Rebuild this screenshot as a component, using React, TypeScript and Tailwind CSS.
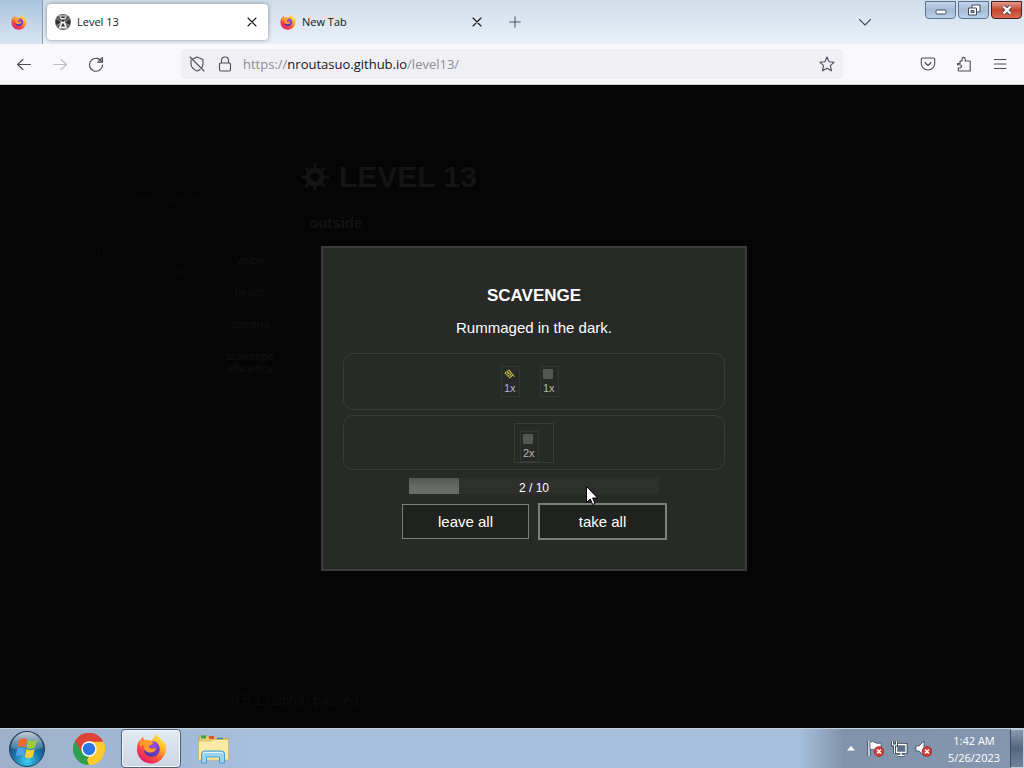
import React from "react";

const UI = "font-['Open_Sans','Noto_Sans',sans-serif]";
const SANS = "font-['Liberation_Sans',Arial,sans-serif]";

function Firefox({ id, className }: { id: string; className: string }) {
  return (
    <svg viewBox="0 0 32 32" className={className} aria-hidden="true">
      <defs>
        <linearGradient id={id + "a"} x1="0.85" y1="0.1" x2="0.2" y2="0.95">
          <stop offset="0" stopColor="#fff04f" />
          <stop offset="0.3" stopColor="#ffb52c" />
          <stop offset="0.6" stopColor="#ff5a36" />
          <stop offset="1" stopColor="#e5166e" />
        </linearGradient>
        <radialGradient id={id + "b"} cx="0.6" cy="0.3" r="0.7">
          <stop offset="0" stopColor="#a04cf0" />
          <stop offset="1" stopColor="#4b36b0" />
        </radialGradient>
      </defs>
      <path
        fill={`url(#${id}a)`}
        d="M20.500 0c1 4 6.500 6 8.500 10.500 1 0 1.500-.5 1.500-.5 1.500 6 .8 11-3 15.500C24 30 20 31.500 16 31.500 7.500 31.500 1 25 1 17c0-4 1-7 2.500-9.500L4 9c.5-2.500 2-4 3.500-5.500 0 1.500.5 3 1.500 4 2-.5 4-.3 6 .5 2-1 4.500-3 5.500-8z"
      />
      <path
        fill={`url(#${id}b)`}
        d="M17 8.500c4 0 7.500 3.500 7.500 8s-3.500 8-8 8-8-3-8.300-7c2 1.500 5 2 7.500.5 1.500-.8 3-1 3.800-1.800-1-1.200-4 .3-5.700-.7-1.500-.8-2-2.500-1.500-3.500 1.500.2 3-1.500 4.700-3.500z"
      />
      <path
        fill="#ff9a2e"
        d="M4 9c2-2.500 7-2.500 10-.5 1.200.8 3 .7 4 1.200-.3 2-3.500 2.600-4.300 3.800-.4 1.500.6 3 2.800 3.200 1.700.1 3-1.200 4.500-.7-1 3.500-4.500 4.800-8 4-4-1-5.500-4-4.500-7.500C6.500 12 5 13 4 15z"
      />
    </svg>
  );
}

function Favicon() {
  return (
    <svg viewBox="0 0 16 16" className="size-4 shrink-0" aria-hidden="true">
      <circle cx="8" cy="8" r="8" fill="#5a5a5a" />
      <path d="M4 1.500h8L9.500 7l3 7.500h-9L6.500 7z" fill="#ececec" />
      <path d="M5 2.500h6L9 4H7zM5.500 5.500L8 8l2.500-2.500M8 9l2 3.500H6z" fill="#2a2a2a" />
      <path d="M1 6.500l2.500-2 1.500 3L3.500 11 1 10zM15 6.500l-2.500-2-1.500 3 1.500 3.500 2.500-1z" fill="#303030" />
      <path d="M1.500 4.500l4 3M14.500 4.500l-4 3M1.500 12l4-3M14.500 12l-4-3" stroke="#b5b5b5" strokeWidth=".8" />
    </svg>
  );
}

function Line({ d, className = "size-4", width = 1.1 }: { d: string; className?: string; width?: number }) {
  return (
    <svg viewBox="0 0 16 16" className={className} fill="none" stroke="currentColor" strokeWidth={width} strokeLinecap="round" strokeLinejoin="round" aria-hidden="true">
      <path d={d} />
    </svg>
  );
}

const paths = {
  close: "M4 4l8 8M12 4l-8 8",
  plus: "M8 2v12M2 8h12",
  down: "M2.500 5.500L8 11l5.500-5.500",
  back: "M14.500 8.500h-13M7 3.500l-5.500 5L7 13.500",
  forward: "M1.500 8.500h13M9 3.500l5.500 5L9 13.500",
  reload: "M14 6.200A6.500 6.500 0 1 0 14.500 9M14.500 1.500v4.800H9.700z",
  shield: "M3.700 3L8 1l6 2.500v4c0 1.500-.4 2.800-1.100 4M11 13.500Q9.500 14.700 8 15 2 12.500 2 7.500V4M1 1l14 14",
  lock: "M4.500 7V4.500a3.500 3.500 0 0 1 7 0V7M3.500 7h9a1 1 0 0 1 1 1v5.500a1.500 1.500 0 0 1-1.500 1.500H4a1.500 1.500 0 0 1-1.500-1.500V8a1 1 0 0 1 1-1z",
  star: "M8 1l2.100 4.700 5.100.5-3.800 3.500 1.100 5.100L8 12.200l-4.500 2.600 1.100-5.100L.8 6.200l5.100-.5z",
  pocket: "M2.500 2h11a1.200 1.200 0 0 1 1.200 1.200V7.500a6.700 6.500 0 0 1-13.400 0V3.200A1.200 1.200 0 0 1 2.500 2zM5 6.500l3 3 3-3",
  puzzle: "M6 5V3a1.600 1.600 0 0 1 3.200 0v2h4.300a.7.700 0 0 1 .7.700V15H3a.7.700 0 0 1-.7-.7V12h1.500a1.600 1.600 0 0 0 0-3.300H1.500V7.500H4V5z",
  menu: "M2.500 3.500h11.500M2.500 8h11.500M2.500 12.500h11.500",
};

function ToolButton({ label, d, faded = false }: { label: string; d: string; faded?: boolean }) {
  return (
    <button aria-label={label} className={"flex h-8 w-9 items-center justify-center " + (faded ? "text-[#bcbcc2]" : "text-[#4d4c58]")}>
      <Line d={d} />
    </button>
  );
}

function Tab({ title, active, icon }: { title: string; active?: boolean; icon: React.ReactNode }) {
  return (
    <div className={"my-1 ml-1 flex w-[221px] items-center gap-1.5 rounded px-2 text-[#15141a] " + (active ? "bg-white shadow-[0_0_4px_rgba(60,70,90,0.55)]" : "")}>
      {icon}
      <span className="flex-1 truncate text-[11px] leading-4">{title}</span>
      <button aria-label={"Close " + title} className="flex">
        <Line d={paths.close} />
      </button>
    </div>
  );
}

function WindowControls() {
  const base = "flex h-[18px] w-[31px] items-center justify-center rounded-b-sm border";
  const blue = " border-[#5c7390] bg-linear-to-b from-[#c3d5ea] via-[#a4bbd6] to-[#bcd2e9]";
  return (
    <div className="flex gap-0.5 self-start pt-px pr-0.5">
      <button aria-label="Minimize" className={base + blue}>
        <svg viewBox="0 0 12 10" className="h-2.5 w-3"><rect x="1" y="5" width="10" height="4" rx="1" fill="#fff" stroke="#414d60" /></svg>
      </button>
      <button aria-label="Restore" className={base + blue}>
        <svg viewBox="0 0 14 12" className="h-3 w-3.5" fill="#fff" stroke="#414d60">
          <path d="M5 1h8v7H5z" /><path d="M1.500 4h8v7h-8z" /><path d="M4 6.500h3v2H4z" fill="#8ba2c0" />
        </svg>
      </button>
      <button aria-label="Close" className={base + " border-[#4b1c1c] bg-linear-to-b from-[#e09a8c] via-[#c4432c] to-[#d86b50]"}>
        <svg viewBox="0 0 12 10" className="h-2.5 w-3"><path d="M2.500 1.500l7 7M9.500 1.500l-7 7" stroke="#50414a" strokeWidth="4" /><path d="M2.500 1.500l7 7M9.500 1.500l-7 7" stroke="#fff" strokeWidth="2.400" /></svg>
      </button>
    </div>
  );
}

function BrowserChrome() {
  return (
    <header className={UI}>
      <div className="flex h-11 bg-linear-to-b from-[#cfdde9] to-[#eaf1f9]">
        <div className="flex w-[43px] items-center justify-center border-r border-[#8f9fb3] bg-linear-to-b from-[#a9c3de] to-[#d9e5f1] pr-1">
          <Firefox id="pin" className="size-4" />
        </div>
        <Tab title="Level 13" active icon={<Favicon />} />
        <Tab title="New Tab" icon={<Firefox id="tab" className="size-4 shrink-0" />} />
        <button aria-label="New tab" className="ml-1.5 flex w-8 items-center justify-center text-[#4d4c58]"><Line d={paths.plus} className="size-3.5" /></button>
        <button aria-label="List all tabs" className="mr-11 ml-auto flex w-8 items-center justify-center text-[#4d4c58]"><Line d={paths.down} /></button>
        <WindowControls />
      </div>
      <div className="flex h-[41px] items-center border-b border-[#cfcfd3] bg-[#f9f9fb] px-1.5">
        <ToolButton label="Back" d={paths.back} />
        <ToolButton label="Forward" d={paths.forward} faded />
        <ToolButton label="Reload" d={paths.reload} />
        <div className="mx-[67px] flex h-[30px] flex-1 items-center rounded bg-[#f0f0f4] px-2 text-[#4d4c58]">
          <Line d={paths.shield} />
          <Line d={paths.lock} className="ml-3 size-4" />
          <a href="https://nroutasuo.github.io/level13/" className="ml-2.5 flex-1 pt-0.5 text-[13px] text-[#8d8d93]">
            https://<span className="text-[#15141a]">nroutasuo.github.io</span>/level13/
          </a>
          <button aria-label="Bookmark this page" className="flex"><Line d={paths.star} /></button>
        </div>
        <ToolButton label="Save to Pocket" d={paths.pocket} />
        <ToolButton label="Extensions" d={paths.puzzle} />
        <ToolButton label="Menu" d={paths.menu} />
      </div>
    </header>
  );
}

function Metal() {
  return <span className="block size-2.5 bg-[#555755]" />;
}

function Rope() {
  return (
    <svg viewBox="0 0 12 10" className="h-2.5 w-3" aria-hidden="true">
      <path d="M1 4l4-3M2.500 5.500l4-3M4 7l4-3M6 8.500l3.500-3M1 4l5 5M3 2.500l5 5M5 1l5.500 7" stroke="#cfca45" strokeWidth="1.100" strokeDasharray="1.400 .6" fill="none" />
    </svg>
  );
}

function Item({ count, children }: { count: string; children: React.ReactNode }) {
  return (
    <li className="flex h-[31px] w-[19px] flex-col items-start border border-[#343634] pt-px pl-0.5 text-[11px] leading-4 text-[#b4b6b4]">
      <span className="flex h-3 items-center">{children}</span>
      <span>{count}</span>
    </li>
  );
}

function Dialog() {
  const button = "h-[35px] w-[127px] bg-[#202220] pt-px text-[15px] text-white outline-1 -outline-offset-1 outline-[#7d7f7d]";
  return (
    <section role="dialog" aria-label="Scavenge" className="w-[426px] border-2 border-[#3a3c3a] bg-[#282a28] px-5 pb-[30px] text-center text-white">
      <h2 className="mt-9 text-[17px] leading-6 font-bold">SCAVENGE</h2>
      <p className="mt-2 text-[15px] leading-6">Rummaged in the dark.</p>
      <ul className="mt-[13px] flex h-[57px] justify-center gap-5 rounded-[10px] border border-[#3a3c3a] pt-3 pr-2">
        <Item count="1x"><Rope /></Item>
        <Item count="1x"><Metal /></Item>
      </ul>
      <div className="mt-[5px] flex h-[55px] items-center justify-center rounded-[10px] border border-[#3a3c3a]">
        <ul className="flex size-10 justify-start border border-[#3a3c3a] pt-[7px] pl-[5px]">
          <Item count="2x"><Metal /></Item>
        </ul>
      </div>
      <div role="progressbar" aria-label="Bag" aria-valuenow={2} aria-valuemax={10} className="mx-auto mt-2 grid h-4 w-[250px] bg-[#2e302e]">
        <span className="col-start-1 row-start-1 h-4 w-1/5 bg-linear-to-b from-[#555755] via-[#666866] to-[#6a6c6a]" />
        <span className="col-start-1 row-start-1 pt-0.5 text-[12px] leading-4">2 / 10</span>
      </div>
      <div className="mt-2.5 flex items-center justify-center gap-2.5">
        <button className={button}>leave all</button>
        <button className={button + " shadow-[0_0_0_1px_#7d7f7d]"}>take all</button>
      </div>
    </section>
  );
}

function Game() {
  return (
    <main className={"relative flex flex-1 flex-col bg-[#050505] text-[#0d0d0d] " + SANS}>
      <div aria-hidden="true" className="flex flex-1 pt-[76px]">
        <div className="flex w-[215px] flex-col items-end pt-7 text-[11px] leading-5 text-[#0a0a0a]">
          <p>Found a new place today</p>
          <p className="mt-8">There are buildings here</p>
          <p className="pr-6">It is dark</p>
        </div>
        <div className="flex w-[70px] flex-col items-center gap-5 pt-[93px] text-center text-[11px] leading-3 text-[#121212]">
          <span>vision</span>
          <span>health</span>
          <span>stamina</span>
          <span>scavenge efficiency</span>
        </div>
        <div className="pl-4">
          <h1 className="flex items-center gap-2.5 text-[30px] leading-8 font-bold text-[#141414]">
            <svg viewBox="0 0 32 32" className="size-7" fill="none" stroke="currentColor">
              <circle cx="16" cy="16" r="8" strokeWidth="6" />
              <path d="M16 0v7M16 25v7M0 16h7M25 16h7M5 5l5 5M22 22l5 5M27 5l-5 5M10 22l-5 5" strokeWidth="3" />
            </svg>
            LEVEL 13
          </h1>
          <h2 className="mt-5 pl-2 text-[15px] leading-5 font-bold text-[#121212]">outside</h2>
        </div>
      </div>
      <p aria-hidden="true" className="pb-[18px] pl-[231px] text-[14px] leading-5">0.5.1 (alpha) passed</p>
      <div className="absolute inset-0 flex items-start justify-center pt-[161px] pl-11">
        <Dialog />
      </div>
      <svg viewBox="0 0 12 19" className="absolute top-[401px] left-[calc(50%+74px)] h-[19px] w-3" aria-hidden="true">
        <path d="M.5.5v16l3.700-3.500 2.500 5.500 2.300-1-2.400-5.500h5z" fill="#fff" stroke="#000" />
      </svg>
    </main>
  );
}

function Badge() {
  return (
    <g>
      <circle cx="12" cy="11.500" r="5" fill="#d43a35" stroke="#8e2427" strokeWidth=".6" />
      <path d="M10 9.500l4 4M14 9.500l-4 4" stroke="#fff" strokeWidth="1.600" />
    </g>
  );
}

function Taskbar() {
  const tray = "flex size-6 items-center justify-center";
  return (
    <footer className={"flex h-10 items-center border-t border-[#c5d0de] bg-linear-to-r from-[#9db0c9] from-0% via-[#a6bfdc] via-25% to-[#a6bfdc] " + UI}>
      <button aria-label="Start" className="ml-2 flex">
        <svg viewBox="0 0 38 38" className="size-[38px]">
          <defs>
            <radialGradient id="orb" cx=".5" cy=".85" r=".85">
              <stop offset="0" stopColor="#3fd0f5" /><stop offset=".45" stopColor="#1a74a8" /><stop offset="1" stopColor="#1b3a5c" />
            </radialGradient>
            <linearGradient id="gloss" x1="0" y1="0" x2="0" y2="1">
              <stop offset="0" stopColor="#fff" stopOpacity=".75" /><stop offset="1" stopColor="#fff" stopOpacity=".1" />
            </linearGradient>
          </defs>
          <circle cx="19" cy="19" r="17.500" fill="url(#orb)" stroke="#24405e" />
          <path d="M3 18a16 16 0 0 1 32 0q-16 5-32 0z" fill="url(#gloss)" />
          <path d="M11 10q4-3 8-.5l-1.500 8q-4-2.500-8 0z" fill="#ee6a2c" />
          <path d="M20 10q4 2 9-.5l-2 8q-4 2.500-8.300 0z" fill="#9ccb3b" />
          <path d="M9.200 19q4-2.500 8 0l-1.500 7.500q-4-2.500-8 0z" fill="#4fa3e8" />
          <path d="M18.500 19q4 2.500 8.200 0l-2 8q-4 2.500-8-.2z" fill="#fbcf3b" />
        </svg>
      </button>
      <button aria-label="Chrome" className="ml-[27px] flex">
        <svg viewBox="0 0 32 32" className="size-8">
          <path d="M16 16L2.140 8A16 16 0 0 1 29.860 8z" fill="#db4437" />
          <path d="M16 16L29.860 8A16 16 0 0 1 16 32z" fill="#fdc92d" />
          <path d="M16 16L2.140 8A16 16 0 0 0 16 32z" fill="#2e9e4f" />
          <path d="M16 8.500h13.900L31 13H20z" fill="#fdc92d" />
          <path d="M22.500 19.500L16 32l-2-5 4-7z" fill="#fdc92d" />
          <path d="M9.500 19.500L2.140 8 8 8l6 6z" fill="#2e9e4f" />
          <path d="M16 8.500h14.100A16 16 0 0 0 2.140 8L9.500 19.700A7.500 7.500 0 0 1 16 8.500z" fill="#db4437" />
          <circle cx="16" cy="16" r="7.700" fill="#fff" />
          <circle cx="16" cy="16" r="6.200" fill="#2a76e5" />
        </svg>
      </button>
      <button aria-label="Firefox" className="ml-4 flex h-[39px] w-[60px] items-center justify-center rounded-sm border border-[#4f6077] bg-linear-to-b from-[#e3eaf3] to-[#cbd6e4] shadow-[inset_0_0_0_1px_#f5f9fd]">
        <Firefox id="task" className="size-[31px]" />
      </button>
      <button aria-label="Windows Explorer" className="ml-4 flex">
        <svg viewBox="0 0 32 30" className="h-[30px] w-8">
          <path d="M2 3q0-1 1-1h8l2 2h17q1 0 1 1v20H2z" fill="#e8cf72" stroke="#b99a45" strokeWidth=".7" />
          <path d="M4 1.500h5v3H4z" fill="#3aa447" /><path d="M12 2h5v3h-5z" fill="#d9542e" /><path d="M20 4h6v3h-6z" fill="#3a7fd0" />
          <path d="M1.500 7h13l2-1.500h15V26h-30z" fill="#fbeaa5" stroke="#cfb25a" strokeWidth=".7" />
          <path d="M4.500 29v-9q0-3 3-3h17q3 0 3 3v9h-5v-6h-13v6z" fill="#9bd3ee" stroke="#4c9cc8" />
          <path d="M6 20q0-1.500 1.500-1.500h17q1.500 0 1.500 1.500" fill="none" stroke="#e3f6ff" />
        </svg>
      </button>
      <div className="ml-auto flex h-full items-center bg-linear-to-r from-[#8193ab]/0 from-0% via-[#8193ab] via-20% to-[#8597b0] pl-10">
        <button aria-label="Show hidden icons" className={tray}>
          <svg viewBox="0 0 8 5" className="h-[5px] w-2"><path d="M4 0l4 4.500H0z" fill="#fff" /></svg>
        </button>
        <button aria-label="Action Center" className={tray}>
          <svg viewBox="0 0 17 17" className="size-[17px]">
            <path d="M2 1v15" stroke="#26364c" strokeWidth="3" /><path d="M2 1v15" stroke="#fff" strokeWidth="1.500" />
            <path d="M3 2q3-1 5 .5t6 .5v7q-3 1-6 0t-5-.5z" fill="#fff" stroke="#35465d" strokeWidth=".7" />
            <Badge />
          </svg>
        </button>
        <button aria-label="Network" className={tray}>
          <svg viewBox="0 0 17 17" className="size-[17px]" fill="none">
            <path d="M5.500 4.500H15v8H5.500zM10 12.500V15M6.500 15.500h7" stroke="#26364c" strokeWidth="3" />
            <path d="M5.500 4.500H15v8H5.500z" fill="#5d7088" />
            <path d="M5.500 4.500H15v8H5.500zM10 12.500V15M6.500 15.500h7" stroke="#fff" strokeWidth="1.400" />
            <path d="M1.500 1v4h4V1M3.500 5v8" stroke="#26364c" strokeWidth="2.800" />
            <path d="M1.500 1v4h4V1M3.500 5v8" stroke="#fff" strokeWidth="1.200" />
          </svg>
        </button>
        <button aria-label="Volume" className={tray}>
          <svg viewBox="0 0 17 17" className="size-[17px]">
            <path d="M1 6h3l5-5v15l-5-5H1z" fill="#fff" stroke="#35465d" strokeWidth=".8" />
            <Badge />
          </svg>
        </button>
        <time className="ml-2 w-[62px] text-center text-[11px] leading-[17px] whitespace-nowrap text-white">1:42 AM<br />5/26/2023</time>
        <button aria-label="Show desktop" className="ml-[5px] h-[39px] w-3.5 border border-[#c0ccda] border-l-[#3e4c61] bg-linear-to-b from-[#8a9ab0] via-[#54657e] to-[#71849e]" />
      </div>
    </footer>
  );
}

export default function App() {
  return (
    <div className="flex min-h-screen flex-col">
      <BrowserChrome />
      <Game />
      <Taskbar />
    </div>
  );
}
